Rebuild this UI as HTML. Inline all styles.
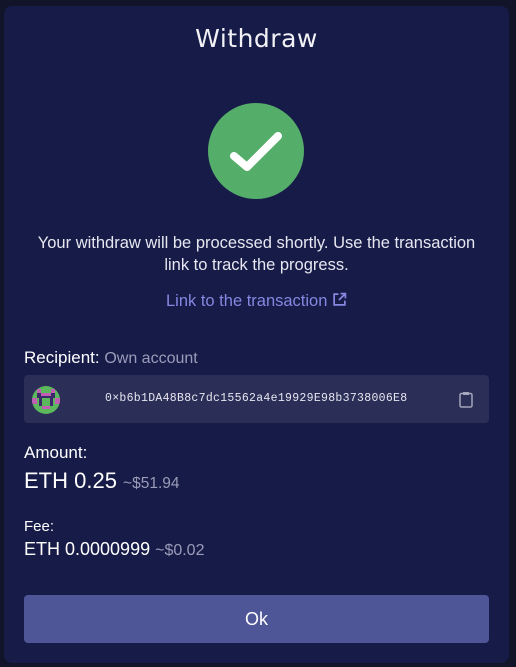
<!DOCTYPE html>
<html><head><meta charset="utf-8"><style>
body{margin:0;width:516px;height:667px;background:#121429;font-family:"Liberation Sans",sans-serif;position:relative;overflow:hidden}
.card{position:absolute;left:4px;top:6px;width:505px;height:657px;background:#171b48;border-radius:8px}
.abs{position:absolute}
.t{color:#fff}
</style></head><body>
<div class="card"></div>
<div class="abs t" style="left:0;width:513px;top:24px;text-align:center;font-size:25px;letter-spacing:0.5px;font-family:'DejaVu Sans',sans-serif;color:#f2f2f6">Withdraw</div>
<svg class="abs" style="left:208px;top:103px" width="96" height="96" viewBox="0 0 96 96">
<circle cx="48" cy="48" r="48" fill="#55ad6a"/>
<path d="M26 53 L39 64 L70 33" stroke="#fff" stroke-width="8" fill="none" stroke-linecap="round" stroke-linejoin="round"/>
</svg>
<div class="abs" style="left:0;width:513px;top:232px;text-align:center;font-size:16.5px;line-height:22px;color:#e6e7f0">Your withdraw will be processed shortly. Use the transaction<br>link to track the progress.</div>
<div class="abs" style="left:0;width:513px;top:292px;text-align:center;font-size:16.5px;color:#8587e0">Link to the transaction <svg width="15" height="15" viewBox="0 0 14 14" style="vertical-align:-1px"><path d="M6 2H2v10h10V8M8 1.5h4.5V6M12.5 1.5L6.5 7.5" stroke="#8587e0" stroke-width="1.6" fill="none"/></svg></div>
<div class="abs" style="left:24px;top:348px;font-size:17px;color:#fff">Recipient: <span style="color:#9a9cb8;font-size:16px">Own account</span></div>
<div class="abs" style="left:24px;top:375px;width:465px;height:48px;background:#2b2e57;border-radius:4px"></div>
<svg class="abs" style="left:32px;top:386px" width="28" height="28" viewBox="0 0 28 28">
<defs><clipPath id="c"><circle cx="14" cy="14" r="14"/></clipPath></defs>
<g clip-path="url(#c)">
<rect width="28" height="28" fill="#5cb85c"/>
<rect x="5" y="3" width="4" height="4" fill="#c25fb5"/><rect x="19" y="3" width="4" height="4" fill="#c25fb5"/>
<rect x="5" y="7" width="18" height="5" fill="#3a2a6a"/>
<rect x="9" y="7" width="10" height="3" fill="#c25fb5"/>
<rect x="0" y="12" width="5" height="6" fill="#c25fb5"/><rect x="23" y="12" width="5" height="6" fill="#c25fb5"/>
<rect x="7" y="12" width="3" height="8" fill="#3a2a6a"/><rect x="18" y="12" width="3" height="8" fill="#3a2a6a"/>
<rect x="10" y="20" width="8" height="3" fill="#c25fb5"/>
</g></svg>
<div class="abs" style="left:105px;top:392px;font-family:'Liberation Mono',monospace;font-size:11.5px;letter-spacing:0.3px;color:#e6e7f0;white-space:nowrap">0×b6b1DA48B8c7dc15562a4e19929E98b3738006E8</div>
<svg class="abs" style="left:459px;top:391px" width="14" height="17" viewBox="0 0 14 17"><rect x="1" y="2.5" width="12" height="13.5" rx="1.5" stroke="#a4a6bb" stroke-width="1.5" fill="none"/><rect x="4" y="1" width="6" height="3" fill="#a4a6bb"/></svg>
<div class="abs t" style="left:24px;top:443px;font-size:17px">Amount:</div>
<div class="abs t" style="left:24px;top:468px;font-size:22px">ETH 0.25 <span style="font-size:15.5px;color:#9a9cb8">~$51.94</span></div>
<div class="abs t" style="left:24px;top:518px;font-size:15px">Fee:</div>
<div class="abs t" style="left:24px;top:539px;font-size:18px">ETH 0.0000999 <span style="color:#9a9cb8;font-size:16px">~$0.02</span></div>
<div class="abs" style="left:24px;top:595px;width:465px;height:48px;background:#4f5698;border-radius:4px;color:#fff;font-size:18px;text-align:center;line-height:48px">Ok</div>
</body></html>
